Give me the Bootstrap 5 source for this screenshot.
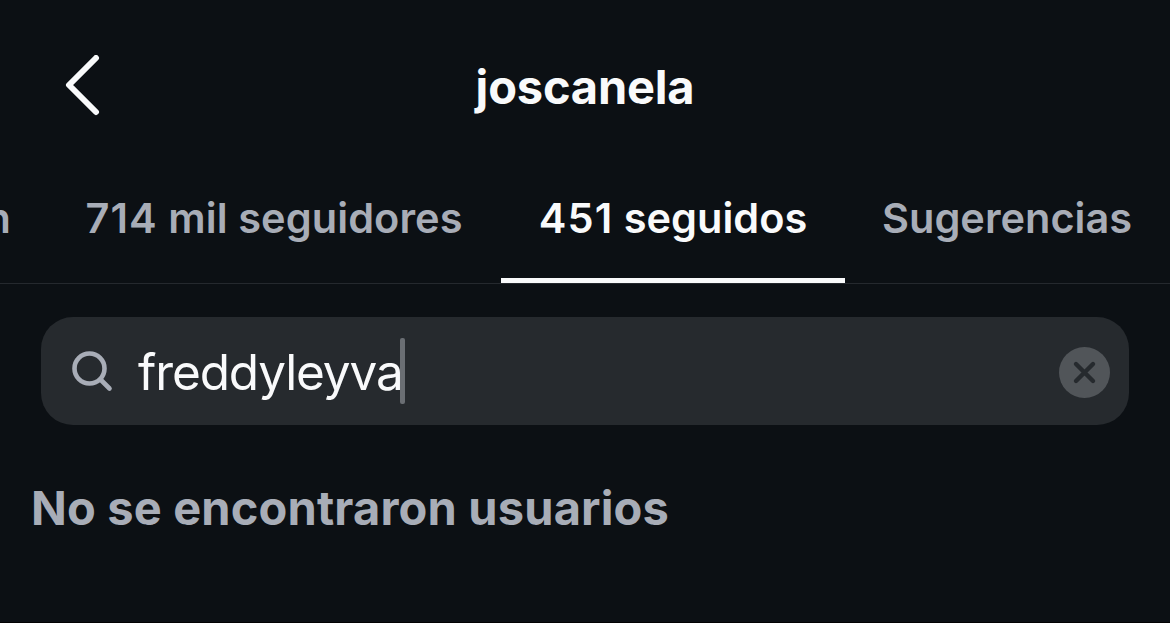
<!DOCTYPE html>
<html lang="es">
  <head>
    <meta charset="UTF-8" />
    <meta name="viewport" content="width=device-width, initial-scale=1.0" />
    <title>joscanela</title>
    <!-- Bootstrap CSS -->
    <link
      href="https://cdn.jsdelivr.net/npm/bootstrap@5.3.0/dist/css/bootstrap.min.css"
      rel="stylesheet"
    />
    <style>
      body {
        height: 623px;
        background: #0c1014;
        color: #f9fafb;
        font-family: Inter, "Liberation Sans", sans-serif;
        border-bottom: 1px solid #020203;
      }
      .profile-bar {
        display: grid;
        grid-template-columns: 110px 1fr 110px;
        height: 174px;
      }
      .back-btn {
        padding-left: 62px;
        line-height: 0;
      }
      .profile-name {
        font-size: 47px;
        letter-spacing: -0.2px;
      }
      .follow-tabs {
        height: 110px;
        border-bottom: 1px solid #25292e;
      }
      .follow-tab {
        flex: none;
        height: 109px;
        padding-bottom: 15px;
        border-bottom: 5px solid transparent;
        color: #a8adb7;
        font-size: 41.5px;
        font-weight: 600;
        text-decoration: none;
        white-space: nowrap;
      }
      .follow-tab.active {
        color: #f9fafb;
        border-color: #f9fafb;
      }
      .follow-count {
        letter-spacing: 1.1px;
      }
      .tab-cut {
        width: 47px;
        padding-right: 36px;
      }
      .tab-followers {
        width: 454px;
        letter-spacing: 0.08px;
      }
      .tab-following {
        width: 344px;
      }
      .tab-suggested {
        width: 325px;
        padding-left: 37px;
      }
      .search-box {
        height: 108px;
        margin: 33px 41px 0;
        padding: 2px 19px 0 30px;
        border-radius: 32px;
        background: #262a2e;
      }
      .search-text {
        margin-left: 25px;
        font-size: 49.5px;
        letter-spacing: -1.12px;
      }
      .caret {
        width: 5px;
        height: 66px;
        margin: -2px 0 0 -3px;
        border-radius: 2px;
        background: #6a6e73;
      }
      .empty-text {
        margin: 55px 0 0 31px;
        font-size: 47px;
        line-height: 56px;
        letter-spacing: 0.16px;
        color: #a8adb7;
      }
    </style>
  </head>
  <body class="overflow-hidden">
    <header class="profile-bar align-items-center">
      <a class="back-btn" href="#" aria-label="Atrás">
        <svg width="40" height="64" viewBox="0 0 40 64" fill="none">
          <path d="M34 5 7 32 34 59" transform="translate(0 -2)" stroke="#f9fafb" stroke-width="6" stroke-linecap="round" stroke-linejoin="round" />
        </svg>
      </a>
      <h1 class="profile-name fw-bold text-center m-0">joscanela</h1>
    </header>

    <nav class="follow-tabs d-flex">
      <a class="follow-tab tab-cut d-flex align-items-center justify-content-end" href="#">n</a>
      <a class="follow-tab tab-followers d-flex align-items-center justify-content-center" href="#">
        <span><span class="follow-count">714</span> mil seguidores</span>
      </a>
      <a class="follow-tab tab-following d-flex align-items-center justify-content-center active" href="#">
        <span><span class="follow-count">451</span> seguidos</span>
      </a>
      <a class="follow-tab tab-suggested d-flex align-items-center" href="#">Sugerencias</a>
    </nav>

    <main>
      <div class="search-box d-flex align-items-center">
        <svg width="42" height="42" viewBox="0 0 42 42" fill="none" stroke="#a8adb7" stroke-width="4.6" stroke-linecap="round">
          <circle cx="18.5" cy="17.5" r="15" />
          <path d="M29.5 28.5 38.5 37.5" />
        </svg>
        <span class="search-text">freddyleyva</span>
        <span class="caret"></span>
        <svg class="ms-auto" width="51" height="51" viewBox="0 0 51 51">
          <circle cx="25.5" cy="25.5" r="25.5" fill="#515559" />
          <path d="M17 17 34 34M34 17 17 34" stroke="#262a2e" stroke-width="4.4" stroke-linecap="round" />
        </svg>
      </div>
      <p class="empty-text fw-bold">No se encontraron usuarios</p>
    </main>

    <!-- Bootstrap JS -->
    <script src="https://cdn.jsdelivr.net/npm/bootstrap@5.3.0/dist/js/bootstrap.bundle.min.js"></script>
  </body>
</html>
